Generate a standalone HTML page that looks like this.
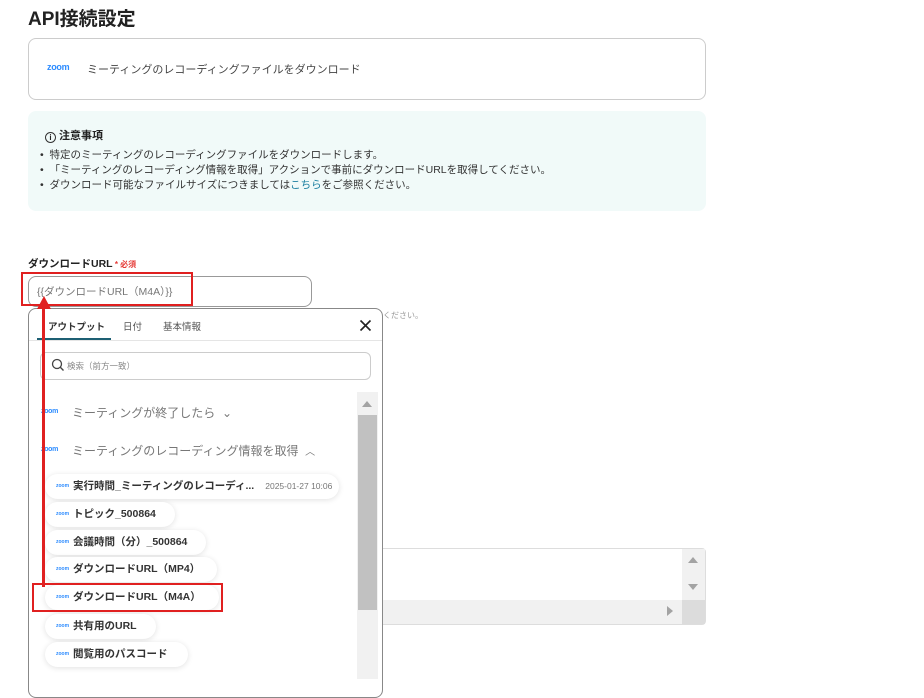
<!DOCTYPE html>
<html><head><meta charset="utf-8"><style>
*{margin:0;padding:0;box-sizing:border-box}
body{width:924px;height:679px;overflow:hidden;background:#fff;font-family:"Liberation Sans","Noto Sans CJK JP",sans-serif;color:#333;position:relative}
.a{position:absolute}
.zoom{color:#2d8cff;font-weight:bold;letter-spacing:-0.3px}
.pill{position:absolute;left:45px;height:25px;border-radius:13px;background:#fff;box-shadow:0 1px 6px rgba(0,0,0,0.12);font-size:10.5px;font-weight:bold;color:#333;line-height:25px;padding-left:28px;white-space:nowrap}
.pill .z{position:absolute;left:11px;top:0;font-size:5px;color:#2d8cff;font-weight:bold}
</style></head><body>
<div class="a" style="left:28px;top:4px;font-size:19px;font-weight:bold;color:#222">API接続設定</div>
<div class="a" style="left:28px;top:38px;width:678px;height:62px;border:1px solid #ccc;border-radius:8px"></div>
<div class="a zoom" style="left:47px;top:62px;font-size:9px">zoom</div>
<div class="a" style="left:87px;top:61px;font-size:11px;color:#444">ミーティングのレコーディングファイルをダウンロード</div>
<div class="a" style="left:28px;top:111px;width:678px;height:100px;background:#f1faf9;border-radius:8px"></div>
<div class="a" style="left:45px;top:127px;font-size:11px;font-weight:bold;color:#222"><span style="display:inline-block;width:11px;height:11px;border:1px solid #333;border-radius:50%;font-size:8px;text-align:center;line-height:9px;vertical-align:-1px;margin-right:3px">i</span>注意事項</div>
<div class="a" style="left:40px;top:148px;font-size:10.5px;color:#333;line-height:15px">
<div>•&nbsp;&nbsp;特定のミーティングのレコーディングファイルをダウンロードします。</div>
<div>•&nbsp;&nbsp;「ミーティングのレコーディング情報を取得」アクションで事前にダウンロードURLを取得してください。</div>
<div>•&nbsp;&nbsp;ダウンロード可能なファイルサイズにつきましては<span style="color:#1a7ea0">こちら</span>をご参照ください。</div>
</div>
<div class="a" style="left:28px;top:256px;font-size:10.5px;font-weight:bold;color:#222">ダウンロードURL<span style="color:#e53935;font-size:8px"> * 必須</span></div>
<div class="a" style="left:28px;top:276px;width:284px;height:31px;border:1px solid #999;border-radius:8px"></div>
<div class="a" style="left:37px;top:284px;font-size:10.5px;color:#777">{{ダウンロードURL（M4A）}}</div>
<div class="a" style="left:21px;top:272px;width:172px;height:34px;border:2.5px solid #e02020"></div>
<div class="a" style="left:383px;top:310px;font-size:8px;color:#999">ください。</div>
<div class="a" style="left:382px;top:548px;width:324px;height:77px;border:1px solid #ddd;border-radius:0 4px 4px 0;background:#fff"></div>
<div class="a" style="left:682px;top:549px;width:23px;height:52px;background:#f1f1f1"></div>
<div class="a" style="left:688px;top:557px;width:0;height:0;border-left:5px solid transparent;border-right:5px solid transparent;border-bottom:6px solid #a3a3a3"></div>
<div class="a" style="left:688px;top:584px;width:0;height:0;border-left:5px solid transparent;border-right:5px solid transparent;border-top:6px solid #a3a3a3"></div>
<div class="a" style="left:383px;top:600px;width:299px;height:24px;background:#f1f1f1"></div>
<div class="a" style="left:682px;top:600px;width:23px;height:24px;background:#dcdcdc"></div>
<div class="a" style="left:667px;top:606px;width:0;height:0;border-top:5px solid transparent;border-bottom:5px solid transparent;border-left:6px solid #a3a3a3"></div>
<div class="a" style="left:28px;top:308px;width:355px;height:390px;border:1px solid #888;border-radius:8px;background:#fff"></div>
<div class="a" style="left:48px;top:319px;font-size:9.5px;font-weight:bold;color:#333">アウトプット</div>
<div class="a" style="left:123px;top:319px;font-size:9.5px;color:#555">日付</div>
<div class="a" style="left:163px;top:319px;font-size:9.5px;color:#555">基本情報</div>
<div class="a" style="left:37px;top:338px;width:74px;height:2px;background:#1d5f73"></div>
<div class="a" style="left:29px;top:340px;width:353px;height:1px;background:#e5e5e5"></div>
<svg class="a" style="left:359px;top:319px" width="13" height="13" viewBox="0 0 13 13"><path d="M1.5 1.5L11.5 11.5M11.5 1.5L1.5 11.5" stroke="#222" stroke-width="1.6"/></svg>
<div class="a" style="left:40px;top:352px;width:331px;height:28px;border:1px solid #ccc;border-radius:6px"></div>
<svg class="a" style="left:51px;top:358px" width="14" height="14" viewBox="0 0 14 14"><circle cx="6" cy="6" r="4.5" stroke="#444" stroke-width="1.3" fill="none"/><path d="M9.3 9.3L12.5 12.5" stroke="#444" stroke-width="1.4"/></svg>
<div class="a" style="left:67px;top:360px;font-size:8.5px;color:#888">検索（前方一致）</div>
<div class="a" style="left:357px;top:392px;width:21px;height:287px;background:#f1f1f1"></div>
<div class="a" style="left:358px;top:415px;width:19px;height:195px;background:#c1c1c1"></div>
<div class="a" style="left:362px;top:401px;width:0;height:0;border-left:5px solid transparent;border-right:5px solid transparent;border-bottom:6px solid #a3a3a3"></div>
<div class="a zoom" style="left:41px;top:408px;font-size:7px">zoom</div>
<div class="a" style="left:72px;top:404px;font-size:12px;color:#777">ミーティングが終了したら&nbsp;&nbsp;⌄</div>
<div class="a zoom" style="left:41px;top:446px;font-size:7px">zoom</div>
<div class="a" style="left:72px;top:442px;font-size:12px;color:#777">ミーティングのレコーディング情報を取得&nbsp;&nbsp;<span style="font-size:10px">︿</span></div>
<div class="pill" style="top:474px;width:294px">
<span class="z">zoom</span>実行時間_ミーティングのレコーディ...<span style="font-weight:normal;color:#777;font-size:8.5px;margin-left:11px">2025-01-27 10:06</span></div>
<div class="pill" style="top:502px;width:130px"><span class="z">zoom</span>トピック_500864</div>
<div class="pill" style="top:530px;width:161px"><span class="z">zoom</span>会議時間（分）_500864</div>
<div class="pill" style="top:557px;width:172px"><span class="z">zoom</span>ダウンロードURL（MP4）</div>
<div class="pill" style="top:585px;width:174px"><span class="z">zoom</span>ダウンロードURL（M4A）</div>
<div class="pill" style="top:614px;width:111px"><span class="z">zoom</span>共有用のURL</div>
<div class="pill" style="top:642px;width:143px"><span class="z">zoom</span>閲覧用のパスコード</div>
<div class="a" style="left:32px;top:583px;width:191px;height:29px;border:2.5px solid #e02020"></div>
<div class="a" style="left:42px;top:306px;width:3px;height:281px;background:#e02020"></div>
<div class="a" style="left:37px;top:296px;width:0;height:0;border-left:7px solid transparent;border-right:7px solid transparent;border-bottom:13px solid #e02020"></div>
</body></html>
